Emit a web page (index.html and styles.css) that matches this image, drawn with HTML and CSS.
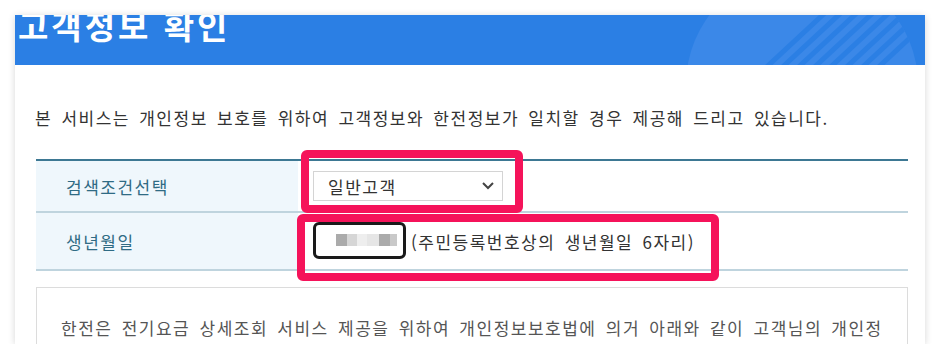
FILE: index.html
```html
<!DOCTYPE html>
<html lang="ko">
<head>
  <meta charset="UTF-8">
  <meta name="viewport" content="width=device-width, initial-scale=1.0">
  <title>고객정보 확인</title>
  <link rel="stylesheet" href="styles.css">
</head>
<body>
  <div class="page">
    <div class="card">
      <!-- 상단 헤더 -->
      <div class="card-head">
        <h1>고객정보 확인</h1>
        <svg class="head-deco" width="240" height="50" viewBox="0 0 240 50">
          <defs>
            <clipPath id="decoClip">
              <circle cx="114" cy="70" r="116"></circle>
            </clipPath>
          </defs>
          <g clip-path="url(#decoClip)">
            <rect x="0" y="0" width="240" height="50" fill="#3b88e8"></rect>
            <g stroke="#2b7fe4" stroke-width="5">
              <line x1="70" y1="60" x2="140" y2="-5"></line>
              <line x1="86" y1="60" x2="156" y2="-5"></line>
              <line x1="102" y1="60" x2="172" y2="-5"></line>
              <line x1="118" y1="60" x2="188" y2="-5"></line>
              <line x1="134" y1="60" x2="204" y2="-5"></line>
              <line x1="150" y1="60" x2="220" y2="-5"></line>
              <line x1="166" y1="60" x2="236" y2="-5"></line>
              <line x1="182" y1="60" x2="252" y2="-5"></line>
            </g>
          </g>
        </svg>
      </div>

      <div class="card-body">
        <p class="intro">본 서비스는 개인정보 보호를 위하여 고객정보와 한전정보가 일치할 경우 제공해 드리고 있습니다.</p>

        <!-- 조회 조건 -->
        <div class="search-table">
          <div class="row row-type">
            <div class="label">검색조건선택</div>
            <div class="value">
              <div class="select-box">
                <span>일반고객</span>
                <svg width="14" height="10" viewBox="0 0 14 10">
                  <polyline points="2,2 7,7 12,2" fill="none" stroke="#444" stroke-width="2"></polyline>
                </svg>
              </div>
            </div>
          </div>
          <div class="row row-birth">
            <div class="label">생년월일</div>
            <div class="value">
              <div class="birth-input">
                <span class="mosaic">
                  <i class="m1"></i><i class="m2"></i><i class="m3"></i><i class="m4"></i><i class="m5"></i><i class="m6"></i>
                </span>
              </div>
              <span class="hint">(주민등록번호상의 생년월일 6자리)</span>
            </div>
          </div>

          <!-- 강조 표시 -->
          <div class="mark mark-type"></div>
          <div class="mark mark-birth"></div>
        </div>

        <div class="notice">
          <p>한전은 전기요금 상세조회 서비스 제공을 위하여 개인정보보호법에 의거 아래와 같이 고객님의 개인정보를 수집·이용하고자 합니다.</p>
        </div>
      </div>
    </div>
  </div>
</body>
</html>
```

FILE: styles.css
```css
body {
  margin: 0;
  background: #fff;
  font-family: "Noto Sans CJK KR", "Noto Sans", sans-serif;
  color: #333;
}

.page {
  padding: 15px 16px 0 15px;
}

.card {
  width: 910px;
  height: 329px;
  background: #fff;
  box-shadow: 0 1px 7px rgba(0, 0, 0, 0.16);
  overflow: hidden;
}

.card-head {
  position: relative;
  height: 50px;
  background: #2b7fe4;
  overflow: hidden;
}

.card-head h1 {
  margin: -6px 0 0 3px;
  font-size: 33px;
  line-height: 33px;
  font-weight: 700;
  letter-spacing: 3px;
  color: #fff;
}

.head-deco {
  position: absolute;
  left: 673px;
  top: 0;
}

.card-body {
  padding: 0 17px 0 21px;
  font-size: 17px;
  letter-spacing: 1.5px;
  word-spacing: 3px;
}

.intro {
  margin: 39px 0 0 -1px;
  line-height: 28px;
  color: #333;
}

.search-table {
  position: relative;
  margin-top: 27px;
  border-top: 2px solid #3d7893;
}

.row {
  display: flex;
  border-bottom: 2px solid #bfd4de;
}

.row-type {
  height: 50px;
}

.row-birth {
  height: 56px;
}

.label {
  width: 232px;
  padding-left: 30px;
  display: flex;
  align-items: center;
  background: #eff7fc;
  color: #2f6b84;
}

.value {
  flex: 1;
  display: flex;
  align-items: center;
  padding-left: 15px;
}

.select-box {
  width: 173px;
  height: 28px;
  border: 1px solid #d4d4d4;
  display: flex;
  align-items: center;
  justify-content: space-between;
  padding: 0 1px 0 14px;
  color: #333;
}

.select-box svg {
  margin-right: 6px;
}

.birth-input {
  width: 93px;
  height: 37px;
  border: 3px solid #1a1a1a;
  border-radius: 6px;
  display: flex;
  align-items: center;
  padding-left: 20px;
  box-sizing: border-box;
  margin-top: -2px;
}

.mosaic {
  display: flex;
  height: 12px;
}

.mosaic i {
  display: block;
  height: 12px;
}

.mosaic .m1 { width: 11px; background: #ababab; }
.mosaic .m2 { width: 10px; background: #d6d6d6; }
.mosaic .m3 { width: 10px; background: #eeeeee; }
.mosaic .m4 { width: 12px; background: #e6e6e6; }
.mosaic .m5 { width: 11px; background: #ababab; }
.mosaic .m6 { width: 7px; background: #c9c9c9; }

.hint {
  margin-left: 5px;
  color: #333;
}

.mark {
  position: absolute;
  border: 8px solid #f5135a;
  border-radius: 6px;
  box-sizing: border-box;
}

.mark-type {
  left: 265px;
  top: -11px;
  width: 222px;
  height: 63px;
}

.mark-birth {
  left: 261px;
  top: 53px;
  width: 422px;
  height: 67px;
}

.notice {
  margin-top: 16px;
  border: 1px solid #dcdcdc;
  padding: 26px 24px 20px 24px;
}

.notice p {
  margin: 0;
  line-height: 28px;
  color: #555;
}
```
